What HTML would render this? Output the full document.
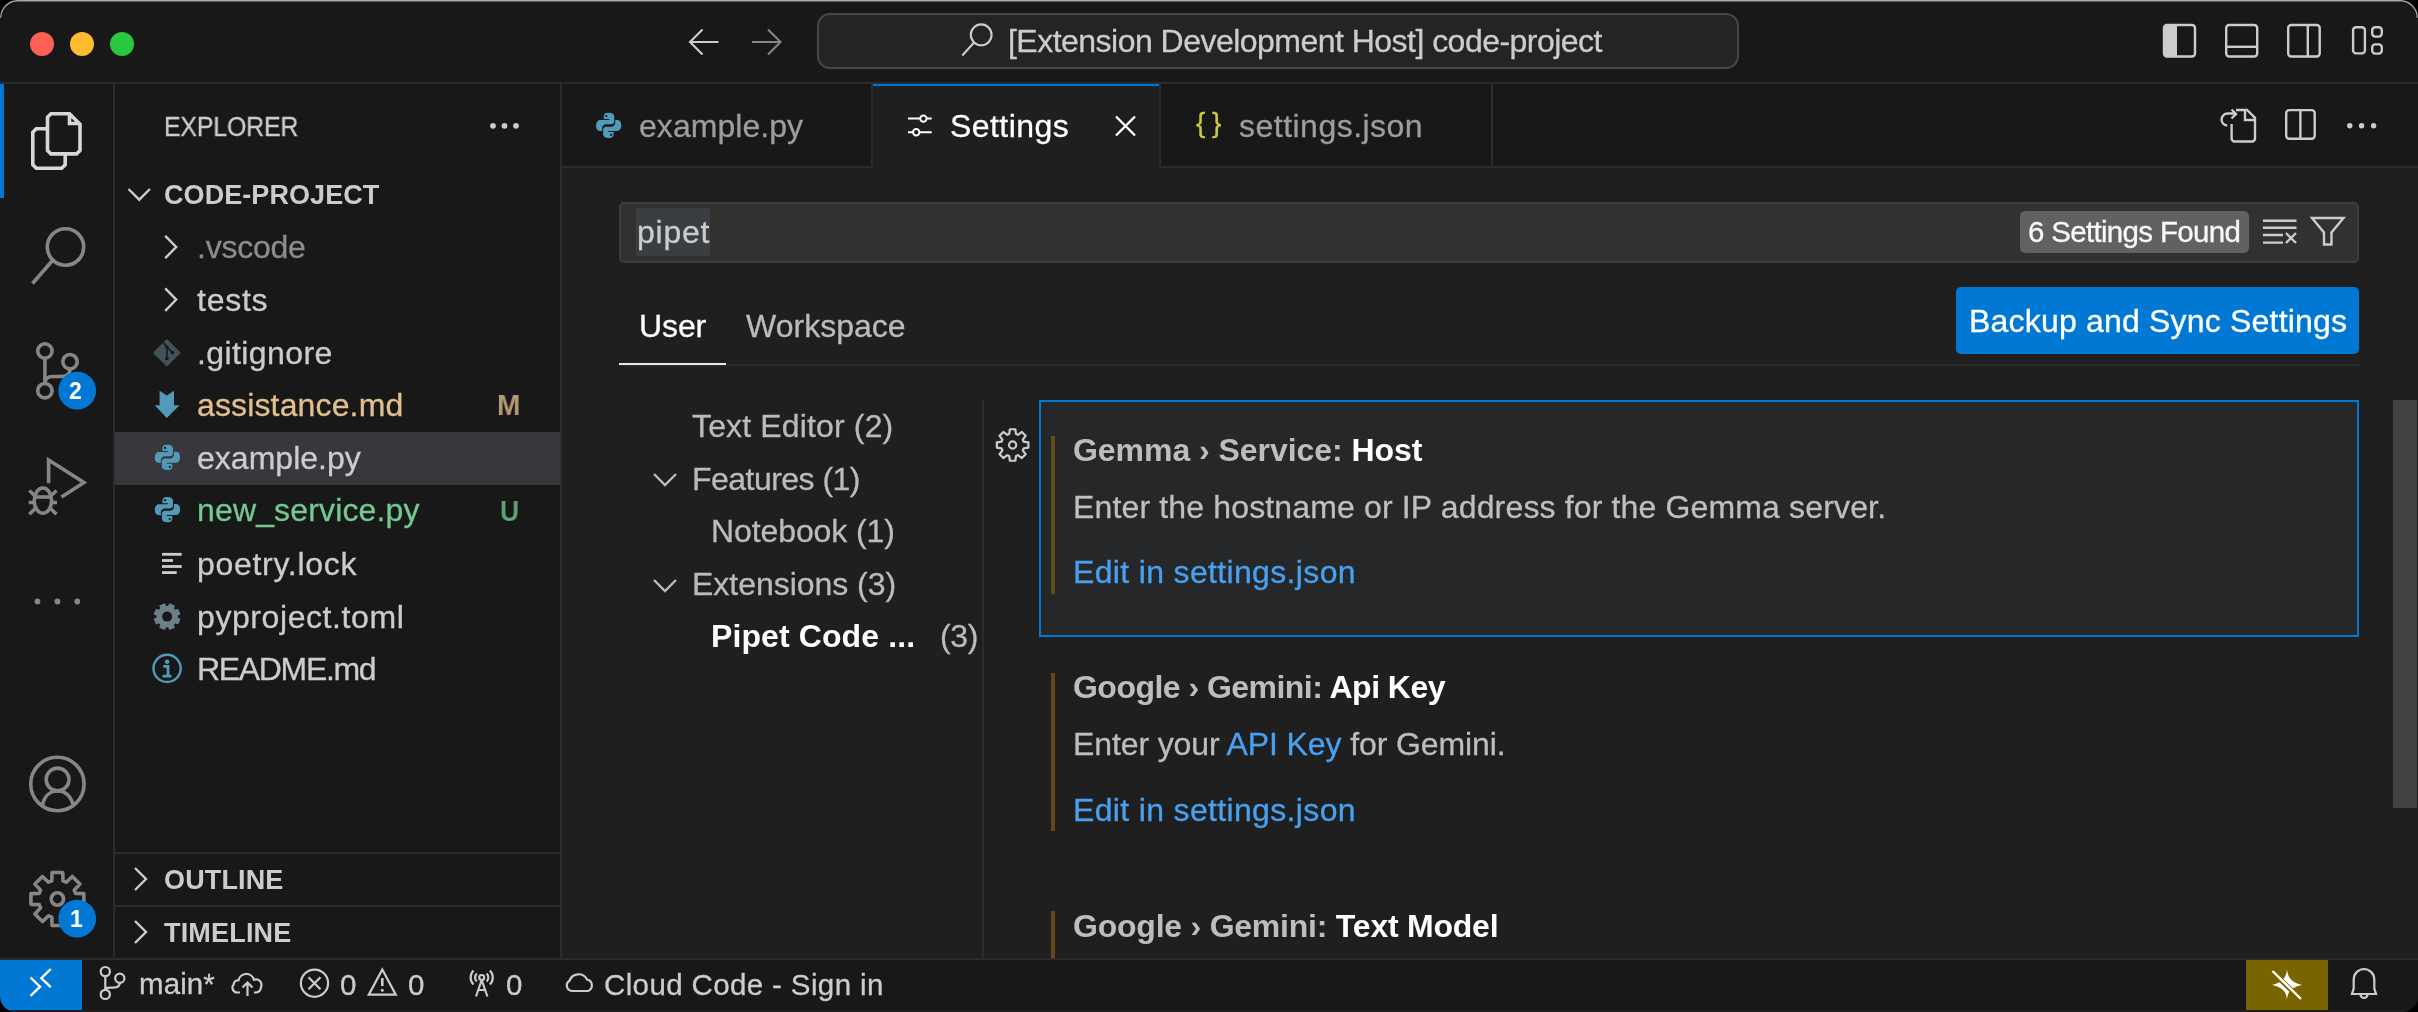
<!DOCTYPE html>
<html><head><meta charset="utf-8"><style>
html,body{margin:0;padding:0;background:#000;}
body{width:2418px;height:1012px;overflow:hidden;position:relative;font-family:"Liberation Sans",sans-serif;}
#win{position:absolute;left:0;top:0;width:2418px;height:1012px;border-radius:17.5px 17.5px 16px 16px;overflow:hidden;background:#181818;}
.r{position:absolute;box-sizing:border-box;}
.t{position:absolute;white-space:nowrap;line-height:1;-webkit-font-smoothing:antialiased;will-change:transform;-webkit-text-stroke:0.3px currentColor;}
svg{position:absolute;left:0;top:0;}
#edge{position:absolute;left:0;top:0;width:2418px;height:1012px;border-radius:18px 18px 16px 16px;box-sizing:border-box;border-top:1.5px solid #a3a3a3;pointer-events:none;}
</style></head><body><div id="win">
<div class="r" style="left:0.00px;top:0.00px;width:2418.00px;height:82.00px;background:#181818;"></div>
<div class="r" style="left:0.00px;top:82.00px;width:2418.00px;height:2.00px;background:#2b2b2b;"></div>
<div class="r" style="left:0.00px;top:84.00px;width:113.00px;height:874.00px;background:#181818;"></div>
<div class="r" style="left:113.00px;top:84.00px;width:2.00px;height:874.00px;background:#2b2b2b;"></div>
<div class="r" style="left:115.00px;top:84.00px;width:445.00px;height:874.00px;background:#181818;"></div>
<div class="r" style="left:560.00px;top:84.00px;width:2.00px;height:874.00px;background:#2b2b2b;"></div>
<div class="r" style="left:562.00px;top:84.00px;width:1856.00px;height:874.00px;background:#1f1f1f;"></div>
<div class="r" style="left:562.00px;top:84.00px;width:309.00px;height:82.00px;background:#181818;"></div>
<div class="r" style="left:562.00px;top:166.00px;width:311.00px;height:2.00px;background:#2b2b2b;"></div>
<div class="r" style="left:871.00px;top:84.00px;width:2.00px;height:82.00px;background:#2b2b2b;"></div>
<div class="r" style="left:873.00px;top:84.00px;width:286.00px;height:2.00px;background:#0078d4;"></div>
<div class="r" style="left:1159.00px;top:84.00px;width:2.00px;height:84.00px;background:#2b2b2b;"></div>
<div class="r" style="left:1161.00px;top:84.00px;width:330.00px;height:82.00px;background:#181818;"></div>
<div class="r" style="left:1161.00px;top:166.00px;width:330.00px;height:2.00px;background:#2b2b2b;"></div>
<div class="r" style="left:1491.00px;top:84.00px;width:2.00px;height:84.00px;background:#2b2b2b;"></div>
<div class="r" style="left:1493.00px;top:84.00px;width:925.00px;height:82.00px;background:#181818;"></div>
<div class="r" style="left:1493.00px;top:166.00px;width:925.00px;height:2.00px;background:#2b2b2b;"></div>
<div class="r" style="left:0.00px;top:958.00px;width:2418.00px;height:2.00px;background:#2b2b2b;"></div>
<div class="r" style="left:0.00px;top:960.00px;width:2418.00px;height:52.00px;background:#181818;"></div>
<div class="r" style="left:0.00px;top:960.00px;width:82.00px;height:52.00px;background:#0078d4;"></div>
<div class="r" style="left:2246.00px;top:960.00px;width:82.00px;height:52.00px;background:#7a6400;"></div>
<div class="r" style="left:115.00px;top:432.00px;width:445.00px;height:53.00px;background:#37373d;"></div>
<div class="r" style="left:115.00px;top:852.00px;width:445.00px;height:2.00px;background:#2b2b2b;"></div>
<div class="r" style="left:115.00px;top:905.00px;width:445.00px;height:2.00px;background:#2b2b2b;"></div>
<div class="r" style="left:0.00px;top:84.00px;width:4.00px;height:114.00px;background:#0078d4;"></div>
<div class="r" style="left:817px;top:13px;width:922px;height:56px;border:2px solid #484848;border-radius:13px;background:#242424"></div>
<div class="t" style="left:1008.20px;top:25.01px;font-size:32.00px;color:#cccccc;letter-spacing:-0.524px;">[Extension Development Host] code-project</div>
<div class="t" style="left:164.30px;top:114.14px;font-size:27.00px;color:#cccccc;letter-spacing:-0.152px;transform:scaleX(0.9200);transform-origin:0 0;">EXPLORER</div>
<div class="t" style="left:163.60px;top:181.54px;font-size:27.00px;color:#cccccc;font-weight:bold;-webkit-text-stroke:0;letter-spacing:0.068px;">CODE-PROJECT</div>
<div class="t" style="left:197.20px;top:231.21px;font-size:32.00px;color:#8c8c8c;letter-spacing:-0.233px;">.vscode</div>
<div class="t" style="left:197.20px;top:283.81px;font-size:32.00px;color:#cccccc;letter-spacing:0.745px;">tests</div>
<div class="t" style="left:197.20px;top:337.11px;font-size:32.00px;color:#cccccc;letter-spacing:0.409px;">.gitignore</div>
<div class="t" style="left:197.20px;top:388.91px;font-size:32.00px;color:#e2c08d;letter-spacing:0.143px;">assistance.md</div>
<div class="t" style="left:197.20px;top:442.11px;font-size:32.00px;color:#cccccc;letter-spacing:0.020px;">example.py</div>
<div class="t" style="left:197.20px;top:494.31px;font-size:32.00px;color:#73c991;letter-spacing:0.148px;">new_service.py</div>
<div class="t" style="left:197.20px;top:548.01px;font-size:32.00px;color:#cccccc;letter-spacing:0.706px;">poetry.lock</div>
<div class="t" style="left:197.20px;top:600.61px;font-size:32.00px;color:#cccccc;letter-spacing:0.582px;">pyproject.toml</div>
<div class="t" style="left:197.20px;top:652.81px;font-size:32.00px;color:#cccccc;letter-spacing:-1.337px;">README.md</div>
<div class="t" style="left:497.00px;top:390.03px;font-size:29.50px;color:#b39a74;font-weight:bold;-webkit-text-stroke:0;letter-spacing:0.000px;transform:scaleX(0.9500);transform-origin:0 0;">M</div>
<div class="t" style="left:500.30px;top:495.53px;font-size:29.50px;color:#5da275;font-weight:bold;-webkit-text-stroke:0;letter-spacing:0.000px;transform:scaleX(0.9000);transform-origin:0 0;">U</div>
<div class="t" style="left:163.60px;top:866.94px;font-size:27.00px;color:#cccccc;font-weight:bold;-webkit-text-stroke:0;letter-spacing:0.145px;">OUTLINE</div>
<div class="t" style="left:163.60px;top:919.74px;font-size:27.00px;color:#cccccc;font-weight:bold;-webkit-text-stroke:0;letter-spacing:0.187px;">TIMELINE</div>
<div class="t" style="left:638.90px;top:109.71px;font-size:32.00px;color:#9d9d9d;letter-spacing:0.053px;">example.py</div>
<div class="t" style="left:950.40px;top:110.11px;font-size:32.00px;color:#ffffff;letter-spacing:0.440px;">Settings</div>
<div class="t" style="left:1195.60px;top:109.20px;font-size:28.00px;color:#cbcb41;letter-spacing:0.000px;">{</div>
<div class="t" style="left:1211.60px;top:109.20px;font-size:28.00px;color:#cbcb41;letter-spacing:0.000px;">}</div>
<div class="t" style="left:1238.60px;top:109.61px;font-size:32.00px;color:#9d9d9d;letter-spacing:0.482px;">settings.json</div>
<div class="r" style="left:619px;top:202px;width:1740px;height:61px;border:2px solid #3c3c3c;border-radius:5px;background:#313131"></div>
<div class="r" style="left:636.00px;top:208.00px;width:74.00px;height:48.00px;background:#3a3d41;"></div>
<div class="t" style="left:636.60px;top:216.11px;font-size:32.00px;color:#cccccc;letter-spacing:0.740px;">pipet</div>
<div class="r" style="left:2020px;top:211px;width:229px;height:42px;border-radius:5px;background:#616161"></div>
<div class="t" style="left:2027.60px;top:217.33px;font-size:29.50px;color:#f8f8f8;letter-spacing:-0.681px;">6 Settings Found</div>
<div class="t" style="left:639.10px;top:310.01px;font-size:32.00px;color:#ffffff;letter-spacing:-0.107px;">User</div>
<div class="t" style="left:745.80px;top:310.01px;font-size:32.00px;color:#bbbbbb;letter-spacing:0.017px;">Workspace</div>
<div class="r" style="left:619.00px;top:364.00px;width:1740.00px;height:2.00px;background:#2b2b2b;"></div>
<div class="r" style="left:619.00px;top:362.50px;width:107.00px;height:2.70px;background:#e7e7e7;"></div>
<div class="r" style="left:1956px;top:287px;width:403px;height:67px;border-radius:5px;background:#0078d4"></div>
<div class="t" style="left:1968.80px;top:305.11px;font-size:32.00px;color:#ffffff;letter-spacing:0.194px;">Backup and Sync Settings</div>
<div class="t" style="left:691.80px;top:409.61px;font-size:32.00px;color:#bbbbbb;letter-spacing:0.147px;">Text Editor (2)</div>
<div class="t" style="left:691.80px;top:462.61px;font-size:32.00px;color:#bbbbbb;letter-spacing:-0.527px;">Features (1)</div>
<div class="t" style="left:710.70px;top:515.41px;font-size:32.00px;color:#bbbbbb;letter-spacing:-0.096px;">Notebook (1)</div>
<div class="t" style="left:691.80px;top:567.91px;font-size:32.00px;color:#bbbbbb;letter-spacing:-0.029px;">Extensions (3)</div>
<div class="t" style="left:710.70px;top:620.31px;font-size:32.00px;color:#ffffff;font-weight:bold;-webkit-text-stroke:0;letter-spacing:0.103px;">Pipet Code ...</div>
<div class="t" style="left:940.00px;top:620.31px;font-size:32.00px;color:#bbbbbb;letter-spacing:-0.370px;">(3)</div>
<div class="r" style="left:982.00px;top:400.00px;width:2.00px;height:558.00px;background:#2b2b2b;"></div>
<div class="r" style="left:1039px;top:400px;width:1320px;height:237px;border:2px solid #0078d4;background:#262728"></div>
<div class="r" style="left:1050.70px;top:436.00px;width:4.50px;height:158.00px;background:#624b1c;"></div>
<div class="t" style="left:1073.00px;top:434.11px;font-size:32.00px;color:#ffffff;font-weight:bold;-webkit-text-stroke:0;letter-spacing:-0.044px;"><span style="color:#bdbdbd">Gemma › Service: </span><span style="color:#ffffff">Host</span></div>
<div class="t" style="left:1073.00px;top:490.91px;font-size:32.00px;color:#bfbfbf;letter-spacing:0.149px;">Enter the hostname or IP address for the Gemma server.</div>
<div class="t" style="left:1073.00px;top:555.51px;font-size:32.00px;color:#48a0f0;letter-spacing:0.343px;">Edit in settings.json</div>
<div class="r" style="left:1051.00px;top:673.30px;width:4.00px;height:158.10px;background:#604a1a;"></div>
<div class="t" style="left:1073.10px;top:671.41px;font-size:32.00px;color:#ffffff;font-weight:bold;-webkit-text-stroke:0;letter-spacing:-0.527px;"><span style="color:#bdbdbd">Google › Gemini: </span><span style="color:#ffffff">Api Key</span></div>
<div class="t" style="left:1073.10px;top:728.41px;font-size:32.00px;color:#bdbdbd;letter-spacing:-0.109px;"><span style="color:#bdbdbd">Enter your </span><span style="color:#48a0f0">API Key</span><span style="color:#bdbdbd"> for Gemini.</span></div>
<div class="t" style="left:1073.10px;top:793.61px;font-size:32.00px;color:#48a0f0;letter-spacing:0.343px;">Edit in settings.json</div>
<div class="r" style="left:1051.00px;top:911.40px;width:4.00px;height:46.60px;background:#604a1a;"></div>
<div class="t" style="left:1073.10px;top:910.11px;font-size:32.00px;color:#ffffff;font-weight:bold;-webkit-text-stroke:0;letter-spacing:-0.225px;"><span style="color:#bdbdbd">Google › Gemini: </span><span style="color:#ffffff">Text Model</span></div>
<div class="r" style="left:2393.00px;top:400.00px;width:24.00px;height:408.00px;background:#434343;"></div>
<div class="r" style="left:0.00px;top:1010.00px;width:2418.00px;height:2.00px;background:#202020;"></div>
<div class="t" style="left:138.50px;top:969.33px;font-size:29.50px;color:#cccccc;letter-spacing:0.095px;">main*</div>
<div class="t" style="left:340.10px;top:969.73px;font-size:29.50px;color:#cccccc;letter-spacing:0.000px;">0</div>
<div class="t" style="left:408.40px;top:969.73px;font-size:29.50px;color:#cccccc;letter-spacing:0.000px;">0</div>
<div class="t" style="left:506.00px;top:969.73px;font-size:29.50px;color:#cccccc;letter-spacing:0.000px;">0</div>
<div class="t" style="left:604.40px;top:970.03px;font-size:29.50px;color:#cccccc;letter-spacing:0.374px;">Cloud Code - Sign in</div>
<svg width="2418" height="1012" viewBox="0 0 2418 1012">
<circle cx="42" cy="44" r="12" fill="#ff5f57"/>
<circle cx="82" cy="44" r="12" fill="#febc2e"/>
<circle cx="122" cy="44" r="12" fill="#28c840"/>
<path d="M690,42 H718.5 M702.5,29.5 L690,42 L702.5,54.5" stroke="#cccccc" stroke-width="2.1" fill="none"/>
<path d="M780.5,42 H752 M768,29.5 L780.5,42 L768,54.5" stroke="#868686" stroke-width="2.1" fill="none"/>
<circle cx="981.2" cy="34.8" r="10.4" stroke="#cccccc" stroke-width="2.1" fill="none"/>
<path d="M973.8,42.8 L962.3,55.5" stroke="#cccccc" stroke-width="2.1" fill="none"/>
<rect x="2164" y="25" width="31" height="31.5" rx="3" stroke="#cccccc" stroke-width="2.4" fill="none"/>
<path d="M2167,25 H2177 V56.5 H2167 A3,3 0 0 1 2164,53.5 V28 A3,3 0 0 1 2167,25 Z" fill="#cccccc"/>
<rect x="2226.2" y="25" width="31" height="31.5" rx="3" stroke="#cccccc" stroke-width="2.4" fill="none"/>
<path d="M2226.2,46.8 H2257.2" stroke="#cccccc" stroke-width="2.4"/>
<rect x="2288.2" y="25" width="31.5" height="31.5" rx="3" stroke="#cccccc" stroke-width="2.4" fill="none"/>
<path d="M2307.8,25 V56.5" stroke="#cccccc" stroke-width="2.4"/>
<rect x="2353.1" y="27.2" width="11.8" height="26.2" rx="3" stroke="#cccccc" stroke-width="2.4" fill="none"/>
<rect x="2372.2" y="27.2" width="9.6" height="9.4" rx="3" stroke="#cccccc" stroke-width="2.4" fill="none"/>
<rect x="2372.2" y="44.4" width="9.6" height="9.2" rx="3" stroke="#cccccc" stroke-width="2.4" fill="none"/>
<g stroke="#d7d7d7" stroke-width="3.6" fill="none" stroke-linejoin="miter">
<path d="M47.5,128.7 H36.3 L32.8,132.2 V164.7 L36.3,168.2 H61.7 L65.2,164.7 V153.9"/>
<path d="M51,113.8 H69.5 L80,124.3 V150.4 L76.5,153.9 H51 L47.5,150.4 V117.3 Z M69.5,113.8 V123.5 H80"/>
</g>
<g stroke="#868686" stroke-width="3.6" fill="none">
<circle cx="65.5" cy="247" r="18.2"/><path d="M52.5,260.5 L32.5,283.5"/>
<circle cx="44.9" cy="351" r="7.2"/><circle cx="70" cy="361.7" r="7.2"/><circle cx="44.9" cy="390.7" r="7.2"/>
<path d="M44.9,358.2 V383.5 M70,368.9 C70,375 66,376.5 60,376.5 H53 C47,376.5 44.9,379 44.9,383.5"/>
<path d="M48.6,483.2 V460 L84,482.5 L61.5,497"/>
<path d="M34.8,497 H51.2"/>
<ellipse cx="42.9" cy="500.6" rx="8.7" ry="12.6"/>
<path d="M29.3,490.5 L35.2,496 M56.5,490.5 L50.6,496 M28.8,502.5 H34.2 M57,502.5 H51.6 M29.3,514.3 L35.5,508.3 M56.5,514.3 L50.3,508.3"/>
<circle cx="57.4" cy="784" r="26.7"/><circle cx="57.6" cy="779.5" r="11.4"/>
<path d="M42.4,806 C44,796 50,791 57.5,791 C65,791 71,796 73.5,806"/>
</g>
<circle cx="37.5" cy="601.5" r="2.9" fill="#868686"/>
<circle cx="57.4" cy="601.5" r="2.9" fill="#868686"/>
<circle cx="77.3" cy="601.5" r="2.9" fill="#868686"/>
<path d="M51.79,880.85 L52.04,872.54 L62.76,872.54 L63.01,880.85 L66.26,882.19 L72.32,876.50 L79.90,884.08 L74.21,890.14 L75.55,893.39 L83.86,893.64 L83.86,904.36 L75.55,904.61 L74.21,907.86 L79.90,913.92 L72.32,921.50 L66.26,915.81 L63.01,917.15 L62.76,925.46 L52.04,925.46 L51.79,917.15 L48.54,915.81 L42.48,921.50 L34.90,913.92 L40.59,907.86 L39.25,904.61 L30.94,904.36 L30.94,893.64 L39.25,893.39 L40.59,890.14 L34.90,884.08 L42.48,876.50 L48.54,882.19 Z" stroke="#868686" stroke-width="3.6" fill="none" stroke-linejoin="round"/>
<circle cx="57.4" cy="899" r="6.2" stroke="#868686" stroke-width="3.6" fill="none"/>
<circle cx="77.2" cy="390.7" r="18.9" fill="#0078d4"/>
<circle cx="77.2" cy="918.7" r="18.9" fill="#0078d4"/>
<circle cx="493" cy="125.8" r="2.9" fill="#cccccc"/>
<circle cx="504.5" cy="125.8" r="2.9" fill="#cccccc"/>
<circle cx="516" cy="125.8" r="2.9" fill="#cccccc"/>
<path d="M128.5,189 L139.2,199.7 L149.9,189" stroke="#cccccc" stroke-width="2.4" fill="none"/>
<path d="M165.2,235.8 L176.2,247.0 L165.2,258.2" stroke="#cccccc" stroke-width="2.4" fill="none"/>
<path d="M165.2,288.4 L176.2,299.6 L165.2,310.8" stroke="#cccccc" stroke-width="2.4" fill="none"/>
<path d="M166.9,340.6 L179.1,352.8 L166.9,365 L154.6,352.8 Z" fill="#41535b" stroke="#41535b" stroke-width="2.4" stroke-linejoin="round"/>
<path d="M163.3,342.8 L167,347 V358.3 M167,347 L172.4,352.6" stroke="#181818" stroke-width="1.5" fill="none"/>
<circle cx="167" cy="347.2" r="1.7" fill="#181818"/><circle cx="172.4" cy="352.6" r="1.8" fill="#181818"/><circle cx="166.9" cy="358.3" r="1.9" fill="#181818"/>
<path d="M159.6,390.8 L166.8,395.4 L174,390.8 V405.2 H179.6 L166.8,418.1 L154.7,405.2 H159.6 Z" fill="#519aba"/>
<g transform="translate(153.90,443.90) scale(1.6875)"><path d="M7.9,0.5 C5.8,0.5 5.1,1.4 5.1,2.6 V4.2 H8.3 V4.8 H3.1 C1.6,4.8 0.5,5.9 0.5,8.1 C0.5,10.3 1.5,11.3 3,11.3 H4.1 V9.7 C4.1,8.4 5.2,7.3 6.5,7.3 H9.5 C10.6,7.3 11.3,6.5 11.3,5.5 V2.6 C11.3,1.5 10.2,0.5 7.9,0.5 Z" fill="#519aba"/><path d="M8.1,15.5 C10.2,15.5 10.9,14.6 10.9,13.4 V11.8 H7.7 V11.2 H12.9 C14.4,11.2 15.5,10.1 15.5,7.9 C15.5,5.7 14.5,4.7 13,4.7 H11.9 V6.3 C11.9,7.6 10.8,8.7 9.5,8.7 H6.5 C5.4,8.7 4.7,9.5 4.7,10.5 V13.4 C4.7,14.5 5.8,15.5 8.1,15.5 Z" fill="#519aba"/><circle cx="6.6" cy="2.4" r="0.65" fill="#181818"/><circle cx="9.4" cy="13.6" r="0.65" fill="#181818"/></g>
<g transform="translate(153.90,496.10) scale(1.6875)"><path d="M7.9,0.5 C5.8,0.5 5.1,1.4 5.1,2.6 V4.2 H8.3 V4.8 H3.1 C1.6,4.8 0.5,5.9 0.5,8.1 C0.5,10.3 1.5,11.3 3,11.3 H4.1 V9.7 C4.1,8.4 5.2,7.3 6.5,7.3 H9.5 C10.6,7.3 11.3,6.5 11.3,5.5 V2.6 C11.3,1.5 10.2,0.5 7.9,0.5 Z" fill="#519aba"/><path d="M8.1,15.5 C10.2,15.5 10.9,14.6 10.9,13.4 V11.8 H7.7 V11.2 H12.9 C14.4,11.2 15.5,10.1 15.5,7.9 C15.5,5.7 14.5,4.7 13,4.7 H11.9 V6.3 C11.9,7.6 10.8,8.7 9.5,8.7 H6.5 C5.4,8.7 4.7,9.5 4.7,10.5 V13.4 C4.7,14.5 5.8,15.5 8.1,15.5 Z" fill="#519aba"/><circle cx="6.6" cy="2.4" r="0.65" fill="#181818"/><circle cx="9.4" cy="13.6" r="0.65" fill="#181818"/></g>
<rect x="162" y="552.9" width="19.69999999999999" height="2.8" fill="#cccccc"/>
<rect x="162" y="559.1" width="11" height="2.8" fill="#cccccc"/>
<rect x="162" y="565.1" width="19.69999999999999" height="2.8" fill="#cccccc"/>
<rect x="162" y="571.2" width="14.699999999999989" height="2.8" fill="#cccccc"/>
<path d="M168.52,606.70 L169.68,604.06 L174.14,605.91 L173.09,608.60 L175.10,610.61 L177.79,609.56 L179.64,614.02 L177.00,615.18 L177.00,618.02 L179.64,619.18 L177.79,623.64 L175.10,622.59 L173.09,624.60 L174.14,627.29 L169.68,629.14 L168.52,626.50 L165.68,626.50 L164.52,629.14 L160.06,627.29 L161.11,624.60 L159.10,622.59 L156.41,623.64 L154.56,619.18 L157.20,618.02 L157.20,615.18 L154.56,614.02 L156.41,609.56 L159.10,610.61 L161.11,608.60 L160.06,605.91 L164.52,604.06 L165.68,606.70 Z" fill="#6d8086" stroke="#6d8086" stroke-width="1.4" stroke-linejoin="round"/>
<circle cx="167.1" cy="616.6" r="5" fill="#181818"/>
<circle cx="167.1" cy="668.4" r="13.6" stroke="#519aba" stroke-width="2.4" fill="none"/>
<circle cx="167.1" cy="661.8" r="2.3" fill="#519aba"/>
<path d="M163.3,666.3 H168 V675.5 M162.5,676.2 H171.5" stroke="#519aba" stroke-width="2.8" fill="none"/>
<path d="M135,868 L146,879 L135,890" stroke="#cccccc" stroke-width="2.4" fill="none"/>
<path d="M135,921 L146,932 L135,943" stroke="#cccccc" stroke-width="2.4" fill="none"/>
<g transform="translate(595.20,112.00) scale(1.6875)"><path d="M7.9,0.5 C5.8,0.5 5.1,1.4 5.1,2.6 V4.2 H8.3 V4.8 H3.1 C1.6,4.8 0.5,5.9 0.5,8.1 C0.5,10.3 1.5,11.3 3,11.3 H4.1 V9.7 C4.1,8.4 5.2,7.3 6.5,7.3 H9.5 C10.6,7.3 11.3,6.5 11.3,5.5 V2.6 C11.3,1.5 10.2,0.5 7.9,0.5 Z" fill="#519aba"/><path d="M8.1,15.5 C10.2,15.5 10.9,14.6 10.9,13.4 V11.8 H7.7 V11.2 H12.9 C14.4,11.2 15.5,10.1 15.5,7.9 C15.5,5.7 14.5,4.7 13,4.7 H11.9 V6.3 C11.9,7.6 10.8,8.7 9.5,8.7 H6.5 C5.4,8.7 4.7,9.5 4.7,10.5 V13.4 C4.7,14.5 5.8,15.5 8.1,15.5 Z" fill="#519aba"/><circle cx="6.6" cy="2.4" r="0.65" fill="#181818"/><circle cx="9.4" cy="13.6" r="0.65" fill="#181818"/></g>
<g stroke="#ffffff" stroke-width="2" fill="none"><path d="M908,118.6 H920.2 M926.6,118.6 H931.7 M908,132.3 H913 M919.4,132.3 H931.7"/><circle cx="923.4" cy="118.6" r="3.2"/><circle cx="916.2" cy="132.3" r="3.2"/></g>
<path d="M1116,116.5 L1135,135.5 M1135,116.5 L1116,135.5" stroke="#ffffff" stroke-width="2.4" fill="none"/>
<g stroke="#cccccc" stroke-width="2.4" fill="none">
<path d="M2231.6,124 V138.5 A3,3 0 0 0 2234.6,141.5 H2252 A3,3 0 0 0 2255,138.5 V117.8 L2247,110 H2236 M2245,110 V120 H2255"/>
<path d="M2227.2,125.5 A6,6 0 0 1 2221.6,119.6 A6,6 0 0 1 2227.6,113.5 H2235.5 M2231.5,109.5 L2236,114 L2231.5,118.5"/>
<rect x="2286.2" y="110.1" width="28.5" height="28.7" rx="3"/><path d="M2300.4,110.1 V138.8"/>
</g>
<circle cx="2349.8" cy="125.8" r="2.7" fill="#cccccc"/>
<circle cx="2361.6" cy="125.8" r="2.7" fill="#cccccc"/>
<circle cx="2373.6" cy="125.8" r="2.7" fill="#cccccc"/>
<g stroke="#cccccc" stroke-width="2.4" fill="none"><path d="M2263,220.7 H2296.5 M2263,227.8 H2296.5 M2263,235 H2283 M2263,242.6 H2283 M2286,233 L2296,243 M2296,233 L2286,243"/><path d="M2312,218 H2343.5 L2331.5,232.5 V244.5 H2324 V232.5 Z"/></g>
<path d="M654,474 L665,485 L676,474" stroke="#bbbbbb" stroke-width="2.4" fill="none"/>
<path d="M654,580 L665,591 L676,580" stroke="#bbbbbb" stroke-width="2.4" fill="none"/>
<path d="M1009.20,434.01 L1009.89,429.23 L1015.31,429.23 L1016.00,434.01 L1017.97,434.83 L1021.84,431.94 L1025.66,435.76 L1022.77,439.63 L1023.59,441.60 L1028.37,442.29 L1028.37,447.71 L1023.59,448.40 L1022.77,450.37 L1025.66,454.24 L1021.84,458.06 L1017.97,455.17 L1016.00,455.99 L1015.31,460.77 L1009.89,460.77 L1009.20,455.99 L1007.23,455.17 L1003.36,458.06 L999.54,454.24 L1002.43,450.37 L1001.61,448.40 L996.83,447.71 L996.83,442.29 L1001.61,441.60 L1002.43,439.63 L999.54,435.76 L1003.36,431.94 L1007.23,434.83 Z" stroke="#cccccc" stroke-width="2.2" fill="none" stroke-linejoin="round"/>
<circle cx="1012.6" cy="445" r="3.6" stroke="#cccccc" stroke-width="2.2" fill="none"/>
<path d="M30.5,977.5 L40,986.7 L30.5,996 M50.7,969.2 L41.3,978.2 L50.7,987.2" stroke="#ffffff" stroke-width="2.4" fill="none"/>
<g stroke="#cccccc" stroke-width="2.2" fill="none">
<circle cx="105.3" cy="971.6" r="4.6"/><circle cx="119.8" cy="978.2" r="4.6"/><circle cx="105.3" cy="994.4" r="4.6"/>
<path d="M105.3,976.2 V989.8 M119.8,982.8 C119.8,986.5 117,987.6 113.5,987.6 H110.5 C107,987.6 105.3,989 105.3,989.8"/>
<path d="M240,992.5 H237.2 A4.8,4.8 0 0 1 233.6,984.6 A4.8,4.8 0 0 1 238.5,980.2 A8,8 0 0 1 254,979.8 A5.4,5.4 0 0 1 261,987 A5.2,5.2 0 0 1 256,992.5 H254 M247.5,996 V982.5 M242.5,987.5 L247.5,982.5 L252.5,987.5"/>
<circle cx="314.5" cy="983.2" r="13.6"/><path d="M308.5,977.2 L320.5,989.2 M320.5,977.2 L308.5,989.2"/>
<path d="M382.3,969.5 L368.8,994.7 H395.8 Z"/><path d="M382.3,978 V986" stroke-width="2.6"/><circle cx="382.3" cy="990.3" r="1.5" fill="#cccccc" stroke="none"/>
<circle cx="481.7" cy="977.5" r="2.5"/><path d="M481.7,980 L476,996.5 M481.7,980 L487.4,996.5 M477.8,990 H485.6"/>
<path d="M473.5,970.5 A10,10 0 0 0 473.5,984.5 M489.9,970.5 A10,10 0 0 1 489.9,984.5 M476.8,973.5 A5.5,5.5 0 0 0 476.8,981.5 M486.6,973.5 A5.5,5.5 0 0 1 486.6,981.5"/>
<path d="M572,991 A5.5,5.5 0 0 1 569.5,980.8 A9.5,9.5 0 0 1 587,979.5 A6,6 0 0 1 588,991 Z"/>
<path d="M2364,969 A10.5,10.5 0 0 1 2374.3,979.5 V988.5 L2376,994 H2352 L2353.7,988.5 V979.5 A10.5,10.5 0 0 1 2364,969 Z M2360.5,994.5 A3.5,3.5 0 0 0 2367.5,994.5"/>
</g>
<path d="M2287,969 C2287.5,976 2290,982 2302,985 C2290,987.5 2287.5,993 2287,1000 C2286.5,993 2284,987.5 2272,985 C2284,982 2286.5,976 2287,969 Z" fill="#ffffff"/>
<path d="M2271.5,971 L2301.5,1000" stroke="#7a6400" stroke-width="5"/>
<path d="M2272.5,971 L2301,999" stroke="#ffffff" stroke-width="2.4"/>
</svg>
<div class="t" style="left:69.10px;top:379.83px;font-size:23.00px;color:#ffffff;font-weight:bold;-webkit-text-stroke:0;letter-spacing:0.000px;">2</div>
<div class="t" style="left:70.10px;top:907.83px;font-size:23.00px;color:#ffffff;font-weight:bold;-webkit-text-stroke:0;letter-spacing:0.000px;">1</div>
<svg width="2418" height="40" style="position:absolute;left:0;top:0"><path d="M0.7,17.7 A17,17 0 0 1 17.7,0.7 H2400.3 A17,17 0 0 1 2417.3,17.7" stroke="#a6a6a6" stroke-width="1.4" fill="none"/></svg>
</div></body></html>
